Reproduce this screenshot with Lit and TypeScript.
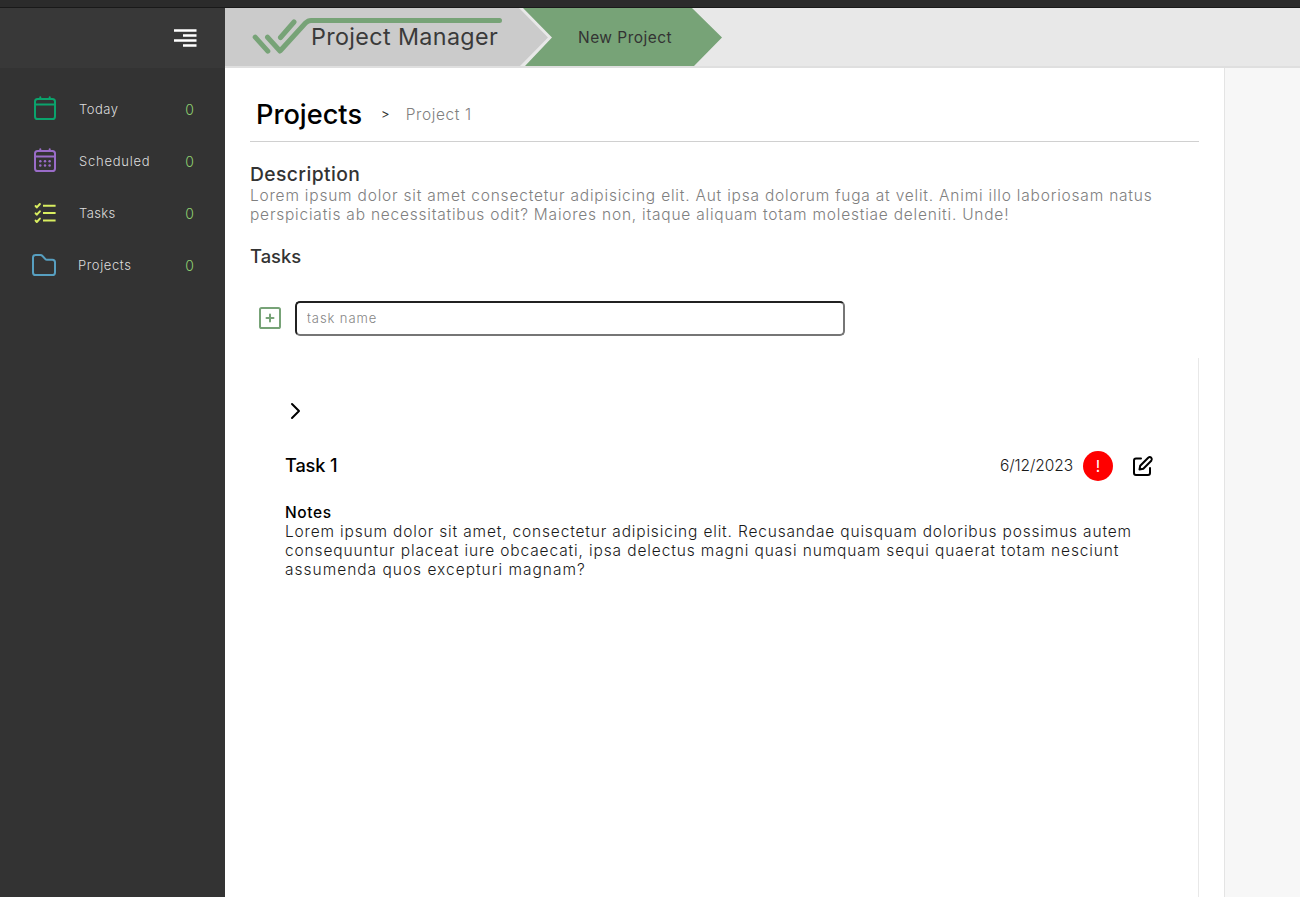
import { LitElement, html, css, svg } from "lit";
import { customElement } from "lit/decorators.js";

const calendar = svg`<rect x="1" y="3" width="20" height="20" rx="2.6"/><path d="M1 8.4H21M6.3 1.3V3M15.7 1.3V3"/>`;

const icons = {
  today: calendar,
  scheduled: svg`${calendar}<g stroke="none" fill="currentColor"><circle cx="6.3" cy="13.2" r="1.25"/><circle cx="11" cy="13.2" r="1.25"/><circle cx="15.6" cy="13.2" r="1.25"/><circle cx="6.3" cy="17.6" r="1.25"/><circle cx="11" cy="17.6" r="1.25"/><circle cx="15.6" cy="17.6" r="1.25"/></g>`,
  tasks: svg`<path stroke-linecap="butt" d="M9 4.8H21.6M9 12.1H21.6M9 19.4H21.6"/><path d="M1.6 5L2.8 6.4L5.9 3M1.6 12.3L2.8 13.7L5.9 10.3M1.6 19.6L2.8 21L5.9 17.6"/>`,
  projects: svg`<path d="M1 4.5C1 3 2 2 3.5 2H8.3C9.2 2 9.9 2.3 10.5 3L13.4 6.1C13.8 6.6 14.2 6.7 14.9 6.7H20.4C22 6.7 23 7.6 23 9.2V19.4C23 21 22 22 20.4 22H3.6C2 22 1 21 1 19.4Z"/>`,
};

@customElement("app-root")
export class AppRoot extends LitElement {
  static styles = css`
    :host { display: flex; flex-direction: column; height: 897px; overflow: hidden; background: #fff; font: 300 15.5px/19px Inter, "Open Sans", sans-serif; color: #333; }
    * { box-sizing: border-box; }
    svg { display: block; fill: none; stroke: currentColor; stroke-width: 2; stroke-linecap: round; stroke-linejoin: round; flex: none; }
    h1, h2, h3, p { margin: 0; font-weight: 300; white-space: nowrap; }
    span { white-space: nowrap; }
    .strip { height: 8px; flex: none; background: #2b2b2b; border-bottom: 1px solid #191919; }
    .shell { flex: 1; display: flex; min-height: 0; }
    nav { width: 225px; flex: none; background: #333; }
    .menu { height: 60px; background: #383838; display: flex; justify-content: flex-end; padding: 20px 28px 0 0; color: #fff; }
    .menu svg { stroke-width: 2.5; stroke-linecap: butt; }
    .list { display: flex; flex-direction: column; padding-top: 15px; }
    .item { height: 52px; display: flex; align-items: center; padding: 0 31px 0 34px; font-size: 13px; color: #dcdcdc; }
    .item svg { margin-right: 23px; margin-top: -3px; }
    .item.tasks svg { margin-top: -1px; }
    .item.projects { padding-left: 32px; }
    .item.projects svg { margin-right: 22px; margin-top: 0; }
    .count { margin-left: auto; color: #8fd070; font-size: 14px; }
    .today svg { color: #0ba36c; }
    .scheduled svg { color: #9a6cc8; }
    .tasks svg { color: #d9ee60; }
    .projects svg { color: #579fc0; }
    .today .label { letter-spacing: 0.48px; }
    .scheduled .label { letter-spacing: 0.75px; }
    .tasks .label { letter-spacing: 0.35px; }
    .projects .label { letter-spacing: 0.6px; }
    .body { flex: 1; display: flex; flex-direction: column; min-width: 0; }
    header { height: 60px; flex: none; background: #e8e8e8; border-bottom: 2px solid #dfdfdf; display: flex; }
    .brand { width: 323px; background: #cbcbcb; clip-path: polygon(0 0, 294px 0, 323px 29.5px, 295px 100%, 0 100%); display: grid; }
    .brand > * { grid-area: 1 / 1; }
    .brand svg { color: #77a377; stroke-width: 5; }
    .name { font-size: 23.3px; line-height: 28px; font-weight: 400; letter-spacing: 0.37px; padding: 15px 0 0 86px; color: #3a3a3a; }
    .new { width: 199px; margin-left: -25px; background: #77a377; clip-path: polygon(0 0, 169px 0, 199px 29.5px, 171px 100%, 2px 100%, 29px 29.5px); padding: 20px 0 0 55px; font-weight: 400; letter-spacing: 0.47px; }
    .columns { flex: 1; display: flex; min-height: 0; }
    main { width: 1000px; border-right: 1px solid #e4e4e4; padding: 25px 25px 0; display: flex; flex-direction: column; }
    aside { flex: 1; background: #f7f7f7; }
    .crumbs { height: 49px; border-bottom: 1px solid #d0d0d0; display: flex; align-items: center; padding: 0 0 6px 6px; }
    .crumbs h1 { font-size: 27.2px; line-height: 34px; font-weight: 500; color: #000; padding-top: 2px; }
    .sep { font-size: 13px; margin-left: 19px; font-weight: 400; }
    .cur { margin-left: 16px; color: #808080; letter-spacing: 0.6px; }
    .desc { padding-top: 21px; }
    h2 { font-size: 19.3px; line-height: 23px; font-weight: 500; }
    .desc h2 { letter-spacing: 0.4px; }
    .desc p { color: #808080; }
    .tasksh { font-size: 18.4px; margin-top: 21px; }
    .add { display: flex; align-items: center; margin-top: 33px; padding-left: 9px; gap: 14px; color: #77a377; }
    .add svg { margin-top: -2px; }
    .add input { width: 550px; height: 35px; border: 2px inset #767676; border-radius: 5px; padding: 0 10px 1px; font: 300 13px Inter, sans-serif; letter-spacing: 0.9px; background: #fff; }
    .add input::placeholder { color: #858585; opacity: 1; }
    .card { flex: 1; margin-top: 22px; border-right: 1px solid #e8e8e8; padding: 44px 44px 0 35px; color: #1a1a1a; }
    .row { display: flex; align-items: center; height: 30px; margin-top: 31px; }
    .row h3 { font-size: 18.2px; font-weight: 500; color: #000; letter-spacing: -0.15px; padding-bottom: 2px; }
    .date { margin-left: auto; padding-bottom: 2px; letter-spacing: -0.08px; }
    .badge { width: 30px; height: 30px; border-radius: 50%; background: red; color: #fff; display: grid; place-items: center; margin: 0 19px 0 10px; font-weight: 400; }
    .row svg, .card > svg { color: #000; }
    .notes { font-weight: 500; color: #000; margin: 22px 0 0 0; letter-spacing: 0.6px; }
    .l1 { letter-spacing: 0.79px; }
    .l2 { letter-spacing: 0.78px; }
    .l3 { letter-spacing: 0.83px; }
    .l4 { letter-spacing: 0.875px; }
    .l5 { letter-spacing: 1px; }
  `;

  item(k: keyof typeof icons, label: string) {
    return html`<div class="item ${k}"><svg width=${k === "projects" ? 24 : 22} height="24">${icons[k]}</svg><span class="label">${label}</span><span class="count">0</span></div>`;
  }

  render() {
    return html`<div class="strip"></div>
    <div class="shell">
      <nav>
        <div class="menu"><svg width="23" height="20"><path d="M0 2.5H22.5M9 7.5H22.5M0 12.5H22.5M9 17.5H22.5"/></svg></div>
        <div class="list">${this.item("today", "Today")}${this.item("scheduled", "Scheduled")}${this.item("tasks", "Tasks")}${this.item("projects", "Projects")}</div>
      </nav>
      <div class="body">
        <header>
          <div class="brand"><svg width="323" height="58"><path d="M30.2 29.2L42.8 43.2M42.5 29.2L55 43L80.5 15Q83 12.4 86 12.4H274.5M55.5 29.5L69 14"/></svg><span class="name">Project Manager</span></div>
          <div class="new">New Project</div>
        </header>
        <div class="columns">
          <main>
            <div class="crumbs"><h1>Projects</h1><span class="sep">&gt;</span><span class="cur">Project 1</span></div>
            <div class="desc">
              <h2>Description</h2>
              <p class="l1">Lorem ipsum dolor sit amet consectetur adipisicing elit. Aut ipsa dolorum fuga at velit. Animi illo laboriosam natus</p>
              <p class="l2">perspiciatis ab necessitatibus odit? Maiores non, itaque aliquam totam molestiae deleniti. Unde!</p>
            </div>
            <h2 class="tasksh">Tasks</h2>
            <div class="add"><svg width="22" height="22"><rect x="1" y="1" width="20" height="20" rx="1.6"/><path d="M11 7.5V14.5M7.5 11H14.5"/></svg><input placeholder="task name"></div>
            <section class="card">
              <svg width="20" height="18"><path d="M7 2L14 9L7 16"/></svg>
              <div class="row"><h3>Task 1</h3><span class="date">6/12/2023</span><span class="badge">!</span>
                <svg width="22" height="22"><path d="M9 3.5H4Q2 3.5 2 5.5V18Q2 20 4 20H16Q18 20 18 18V13"/><path d="M7.5 14.5L8.2 10.8L16.2 2.7Q17.8 1.4 19.3 2.8Q20.6 4.3 19.3 5.8L11.3 13.7Z"/></svg></div>
              <p class="notes">Notes</p>
              <p class="l3">Lorem ipsum dolor sit amet, consectetur adipisicing elit. Recusandae quisquam doloribus possimus autem</p>
              <p class="l4">consequuntur placeat iure obcaecati, ipsa delectus magni quasi numquam sequi quaerat totam nesciunt</p>
              <p class="l5">assumenda quos excepturi magnam?</p>
            </section>
          </main>
          <aside></aside>
        </div>
      </div>
    </div>`;
  }
}
